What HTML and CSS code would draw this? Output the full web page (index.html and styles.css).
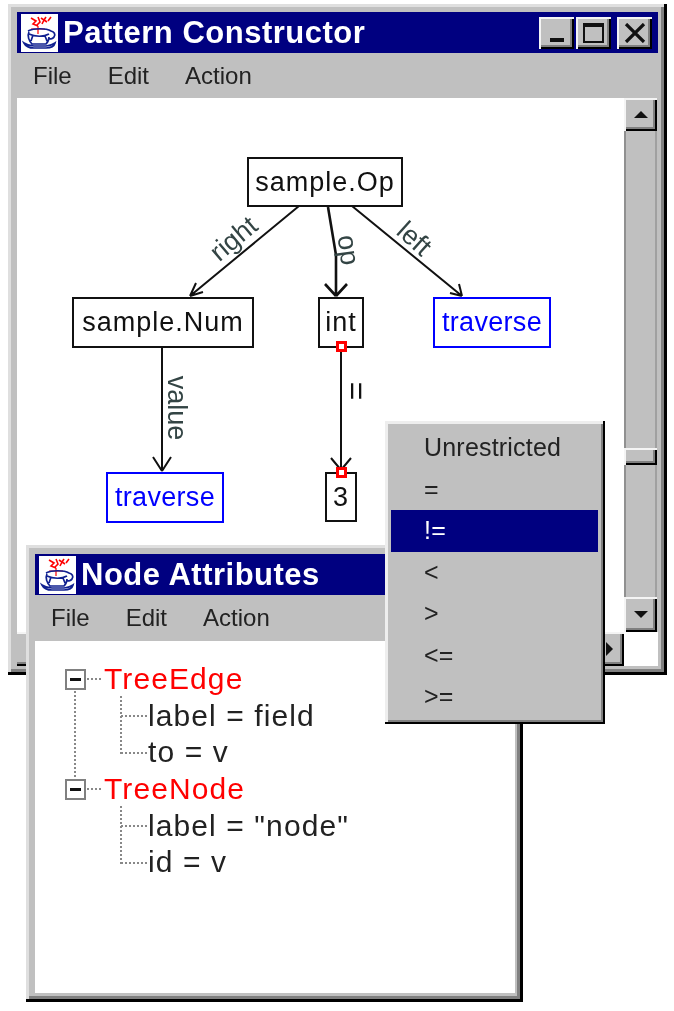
FILE: index.html
```html
<!DOCTYPE html>
<html lang="en">
<head>
    <meta charset="UTF-8">
    <meta name="viewport" content="width=device-width, initial-scale=1.0">
    <title>Pattern Constructor</title>
    <link rel="stylesheet" href="styles.css">
</head>
<body>
    <svg class="icon-defs" width="0" height="0">
        <symbol id="cup" viewBox="0 0 37 38">
            <rect width="37" height="38" fill="#fff"/>
            <path d="M10 4l5 3-3 3 5 2M17 3l2 5-3 3M20 4l3 2-2 4M25 3l-2 3 3 2M30 3l-3 4" fill="none" stroke="#f00" stroke-width="1.6"/>
            <path d="M17 12v8M10 15h14" stroke="#f00" stroke-width="1.2"/>
            <path d="M7 17c6-3 18-3 23 0 3 1 5 3 3 6-1 2-3 2-5 2M8 18c-2 4 0 9 3 12h14c2-2 3-4 3-7M8 20c6 3 15 3 20 0M12 21l-2 6M24 22l2 5M3 29c2 4 6 5 10 5h12c4 0 8-1 9-5-3 2-6 3-9 3H13c-3 0-7-1-10-3z" fill="none" stroke="#102090" stroke-width="1.7"/>
        </symbol>
    </svg>

    <div class="window main-window">
        <div class="titlebar">
            <svg class="app-icon"><use href="#cup"/></svg>
            <span class="title-text">Pattern Constructor</span>
            <div class="title-buttons">
                <button class="title-btn"><span class="glyph-min"></span></button>
                <button class="title-btn"><span class="glyph-max"></span></button>
                <button class="title-btn close-btn">
                    <svg width="22" height="20" viewBox="0 0 22 20"><path d="M2 1l18 18M20 1L2 19" stroke="#111" stroke-width="3.2" fill="none"/></svg>
                </button>
            </div>
        </div>
        <div class="menubar">
            <span>File</span>
            <span>Edit</span>
            <span>Action</span>
        </div>
        <div class="main-body">
            <div class="canvas">
                <!-- edges, in canvas coordinates -->
                <svg class="edges" width="607" height="534" viewBox="17 98 607 534">
                    <g fill="none" stroke="#111" stroke-width="2">
                        <path d="M299 206L190 296M190 296l6-13M190 296l13-4"/>
                        <path d="M328 207l8 48v41M336 296l-11-12M336 296l11-12" stroke-width="2.6"/>
                        <path d="M352 206l110 90M462 296l-12-3M462 296l-3-12"/>
                        <path d="M162 347v124M162 471l-9-14M162 471l9-14"/>
                        <path d="M341 347v124M341 470l-10-12M341 470l10-12"/>
                    </g>
                </svg>
                <div class="node node-op">sample.Op</div>
                <div class="node node-num">sample.Num</div>
                <div class="node node-int">int</div>
                <div class="node node-traverse-a traverse">traverse</div>
                <div class="node node-traverse-b traverse">traverse</div>
                <div class="node node-three">3</div>
                <span class="port port-a"></span>
                <span class="port port-b"></span>
                <span class="edge-label label-right">right</span>
                <span class="edge-label label-op">op</span>
                <span class="edge-label label-left">left</span>
                <span class="edge-label label-value">value</span>
                <span class="edge-label label-eq">=</span>
            </div>
            <div class="vscroll">
                <div class="scroll-btn"><span class="arrow-up"></span></div>
                <div class="scroll-track track-upper"></div>
                <div class="scroll-thumb"></div>
                <div class="scroll-track"></div>
                <div class="scroll-btn scroll-btn-low"><span class="arrow-down"></span></div>
            </div>
        </div>
        <div class="main-foot">
            <div class="hscroll"><span class="arrow-right"></span></div>
            <div class="corner"></div>
        </div>
    </div>

    <div class="window attr-window">
        <div class="titlebar">
            <svg class="app-icon"><use href="#cup"/></svg>
            <span class="title-text">Node Attributes</span>
        </div>
        <div class="menubar">
            <span>File</span>
            <span>Edit</span>
            <span>Action</span>
        </div>
        <div class="tree">
            <svg class="tree-lines" width="200" height="240" viewBox="35 641 200 240">
                <g fill="none" stroke="#888" stroke-width="2" stroke-dasharray="2 2">
                    <path d="M75 691v87M87 679h16M87 789h16"/>
                    <path d="M121 696v58M121 716h26M121 753h26"/>
                    <path d="M121 806v58M121 826h26M121 863h26"/>
                </g>
            </svg>
            <div class="tree-row tree-head"><span class="toggle"></span>TreeEdge</div>
            <div class="tree-row tree-leaf">label = field</div>
            <div class="tree-row tree-leaf">to = v</div>
            <div class="tree-row tree-head"><span class="toggle"></span>TreeNode</div>
            <div class="tree-row tree-leaf">label = "node"</div>
            <div class="tree-row tree-leaf">id = v</div>
        </div>
    </div>

    <div class="popup">
        <div class="popup-item">Unrestricted</div>
        <div class="popup-item">=</div>
        <div class="popup-item selected">!=</div>
        <div class="popup-item">&lt;</div>
        <div class="popup-item">&gt;</div>
        <div class="popup-item">&lt;=</div>
        <div class="popup-item">&gt;=</div>
    </div>
</body>
</html>
```

FILE: styles.css
```css
html, body {
    margin: 0;
    height: 100%;
    background-color: #fff;
    overflow: hidden;
}

body {
    font-family: "Liberation Sans", Arial, sans-serif;
    color: #111;
    position: relative;
    width: 674px;
    height: 1011px;
}

.icon-defs {
    position: absolute;
}

/* windows sit on a free desktop */
.window {
    position: absolute;
    box-sizing: border-box;
    display: flex;
    flex-direction: column;
    background-color: #c0c0c0;
    border-right: 3px solid #000;
    border-bottom: 3px solid #000;
    box-shadow: inset 3px 3px 0 #dfdfdf, inset -3px -3px 0 #808080;
    filter: blur(0.6px);
}

.main-window {
    left: 8px;
    top: 4px;
    width: 659px;
    height: 671px;
    padding: 8px 6px 6px 9px;
}

.attr-window {
    left: 26px;
    top: 545px;
    width: 497px;
    height: 457px;
    padding: 9px 5px 6px 9px;
}

.titlebar {
    height: 41px;
    flex: none;
    display: flex;
    align-items: center;
    background-color: #000080;
    color: #fff;
    padding-left: 4px;
}

.app-icon {
    width: 37px;
    height: 38px;
    flex: none;
}

.title-text {
    font-size: 31px;
    font-weight: bold;
    letter-spacing: 0.5px;
    margin-left: 5px;
    white-space: nowrap;
}

.title-buttons {
    margin-left: auto;
    display: flex;
    gap: 2px;
    margin-right: 6px;
}

.title-btn {
    width: 35px;
    height: 32px;
    padding: 0;
    background-color: #c0c0c0;
    border: none;
    box-shadow: inset 2px 2px 0 #f4f4f4, inset -2px -2px 0 #000, inset -4px -4px 0 #808080;
    display: flex;
    align-items: center;
    justify-content: center;
}

.close-btn {
    margin-left: 4px;
}

.glyph-min {
    width: 14px;
    height: 4px;
    background-color: #111;
    margin-top: 14px;
}

.glyph-max {
    width: 17px;
    height: 14px;
    border: 2px solid #111;
    border-top-width: 4px;
}

.menubar {
    height: 44px;
    flex: none;
    display: flex;
    align-items: center;
    gap: 36px;
    padding-left: 16px;
    font-size: 24px;
    color: #222;
    margin-top: 1px;
}

.main-body {
    display: flex;
    height: 534px;
    flex: none;
}

.canvas {
    position: relative;
    width: 607px;
    background-color: #fff;
    overflow: hidden;
}

.edges {
    position: absolute;
    left: 0;
    top: 0;
}

.node {
    position: absolute;
    box-sizing: border-box;
    display: flex;
    align-items: center;
    justify-content: center;
    border: 2px solid #111;
    background-color: #fff;
    font-size: 27px;
    letter-spacing: 1px;
    white-space: nowrap;
}

.traverse {
    border-color: #0000ff;
    color: #0000ff;
    letter-spacing: 0.3px;
}

.node-op { left: 230px; top: 59px; width: 156px; height: 50px; }
.node-num { left: 55px; top: 199px; width: 182px; height: 51px; }
.node-int { left: 301px; top: 199px; width: 46px; height: 51px; }
.node-traverse-a { left: 416px; top: 199px; width: 118px; height: 51px; }
.node-traverse-b { left: 89px; top: 374px; width: 118px; height: 51px; }
.node-three { left: 308px; top: 374px; width: 32px; height: 50px; }

.port {
    position: absolute;
    box-sizing: border-box;
    width: 11px;
    height: 11px;
    border: 3px solid #f00;
    background-color: #fff;
}

.port-a { left: 319px; top: 243px; }
.port-b { left: 319px; top: 369px; }

.edge-label {
    position: absolute;
    font-size: 27px;
    line-height: 1;
    color: #344;
    white-space: nowrap;
    transform: translate(-50%, -50%) rotate(var(--turn));
}

.label-right { left: 217px; top: 141px; --turn: -40deg; }
.label-op { left: 331px; top: 152px; --turn: 82deg; }
.label-left { left: 397px; top: 141px; --turn: 42deg; }
.label-value { left: 159px; top: 310px; --turn: 90deg; }
.label-eq { left: 340px; top: 293px; --turn: 90deg; color: #111; font-size: 32px; }

.vscroll {
    width: 33px;
    flex: none;
    display: flex;
    flex-direction: column;
}

.scroll-btn {
    height: 33px;
    flex: none;
    display: flex;
    align-items: center;
    justify-content: center;
    box-shadow: inset 2px 2px 0 #f4f4f4, inset -2px -2px 0 #000, inset -4px -4px 0 #808080;
}

.scroll-btn-low {
    height: 35px;
}

.scroll-thumb {
    height: 17px;
    flex: none;
    box-shadow: inset 2px 2px 0 #f4f4f4, inset -2px -2px 0 #000, inset -4px -4px 0 #808080;
}

.scroll-track {
    flex: 1;
    box-shadow: inset 2px 0 0 #909090, inset -2px 0 0 #a0a0a0;
}

.track-upper {
    flex: none;
    height: 317px;
}

.arrow-up, .arrow-down, .arrow-right {
    width: 0;
    height: 0;
    border: 7px solid transparent;
}

.arrow-up {
    border-bottom-color: #111;
    border-top-width: 0;
}

.arrow-down {
    border-top-color: #111;
    border-bottom-width: 0;
}

.arrow-right {
    border-left-color: #111;
    border-right-width: 0;
}

.main-foot {
    display: flex;
    flex: 1;
}

.hscroll {
    width: 607px;
    box-sizing: border-box;
    display: flex;
    align-items: center;
    justify-content: flex-end;
    padding-right: 11px;
    box-shadow: inset 0 2px 0 #f4f4f4, inset -2px -2px 0 #000, inset -4px -4px 0 #808080;
}

.corner {
    flex: 1;
    background-color: #fff;
}

.tree {
    position: relative;
    flex: 1;
    background-color: #fff;
    margin-top: 1px;
    padding-top: 20px;
    font-size: 30px;
    letter-spacing: 1.1px;
    color: #222;
}

.tree-lines {
    position: absolute;
    left: 0;
    top: 0;
}

.tree-row {
    height: 36.6px;
    display: flex;
    align-items: center;
    white-space: nowrap;
    position: relative;
}

.tree-head {
    color: #f00;
    padding-left: 30px;
}

.tree-leaf {
    padding-left: 113px;
}

.toggle {
    box-sizing: border-box;
    width: 21px;
    height: 21px;
    margin-right: 18px;
    border: 2px solid #808080;
    background: linear-gradient(#111, #111) center / 11px 3px no-repeat #fff;
}

.popup {
    position: absolute;
    box-sizing: border-box;
    left: 385px;
    top: 421px;
    width: 220px;
    height: 303px;
    padding: 6px 5px 5px 6px;
    background-color: #c0c0c0;
    border-right: 2px solid #000;
    border-bottom: 2px solid #000;
    box-shadow: inset 3px 3px 0 #eee, inset -2px -2px 0 #808080;
    filter: blur(0.6px);
}

.popup-item {
    height: 41.5px;
    display: flex;
    align-items: center;
    padding-left: 33px;
    font-size: 25px;
    letter-spacing: 0.2px;
    color: #222;
}

.popup-item.selected {
    background-color: #000080;
    color: #fff;
}
```
